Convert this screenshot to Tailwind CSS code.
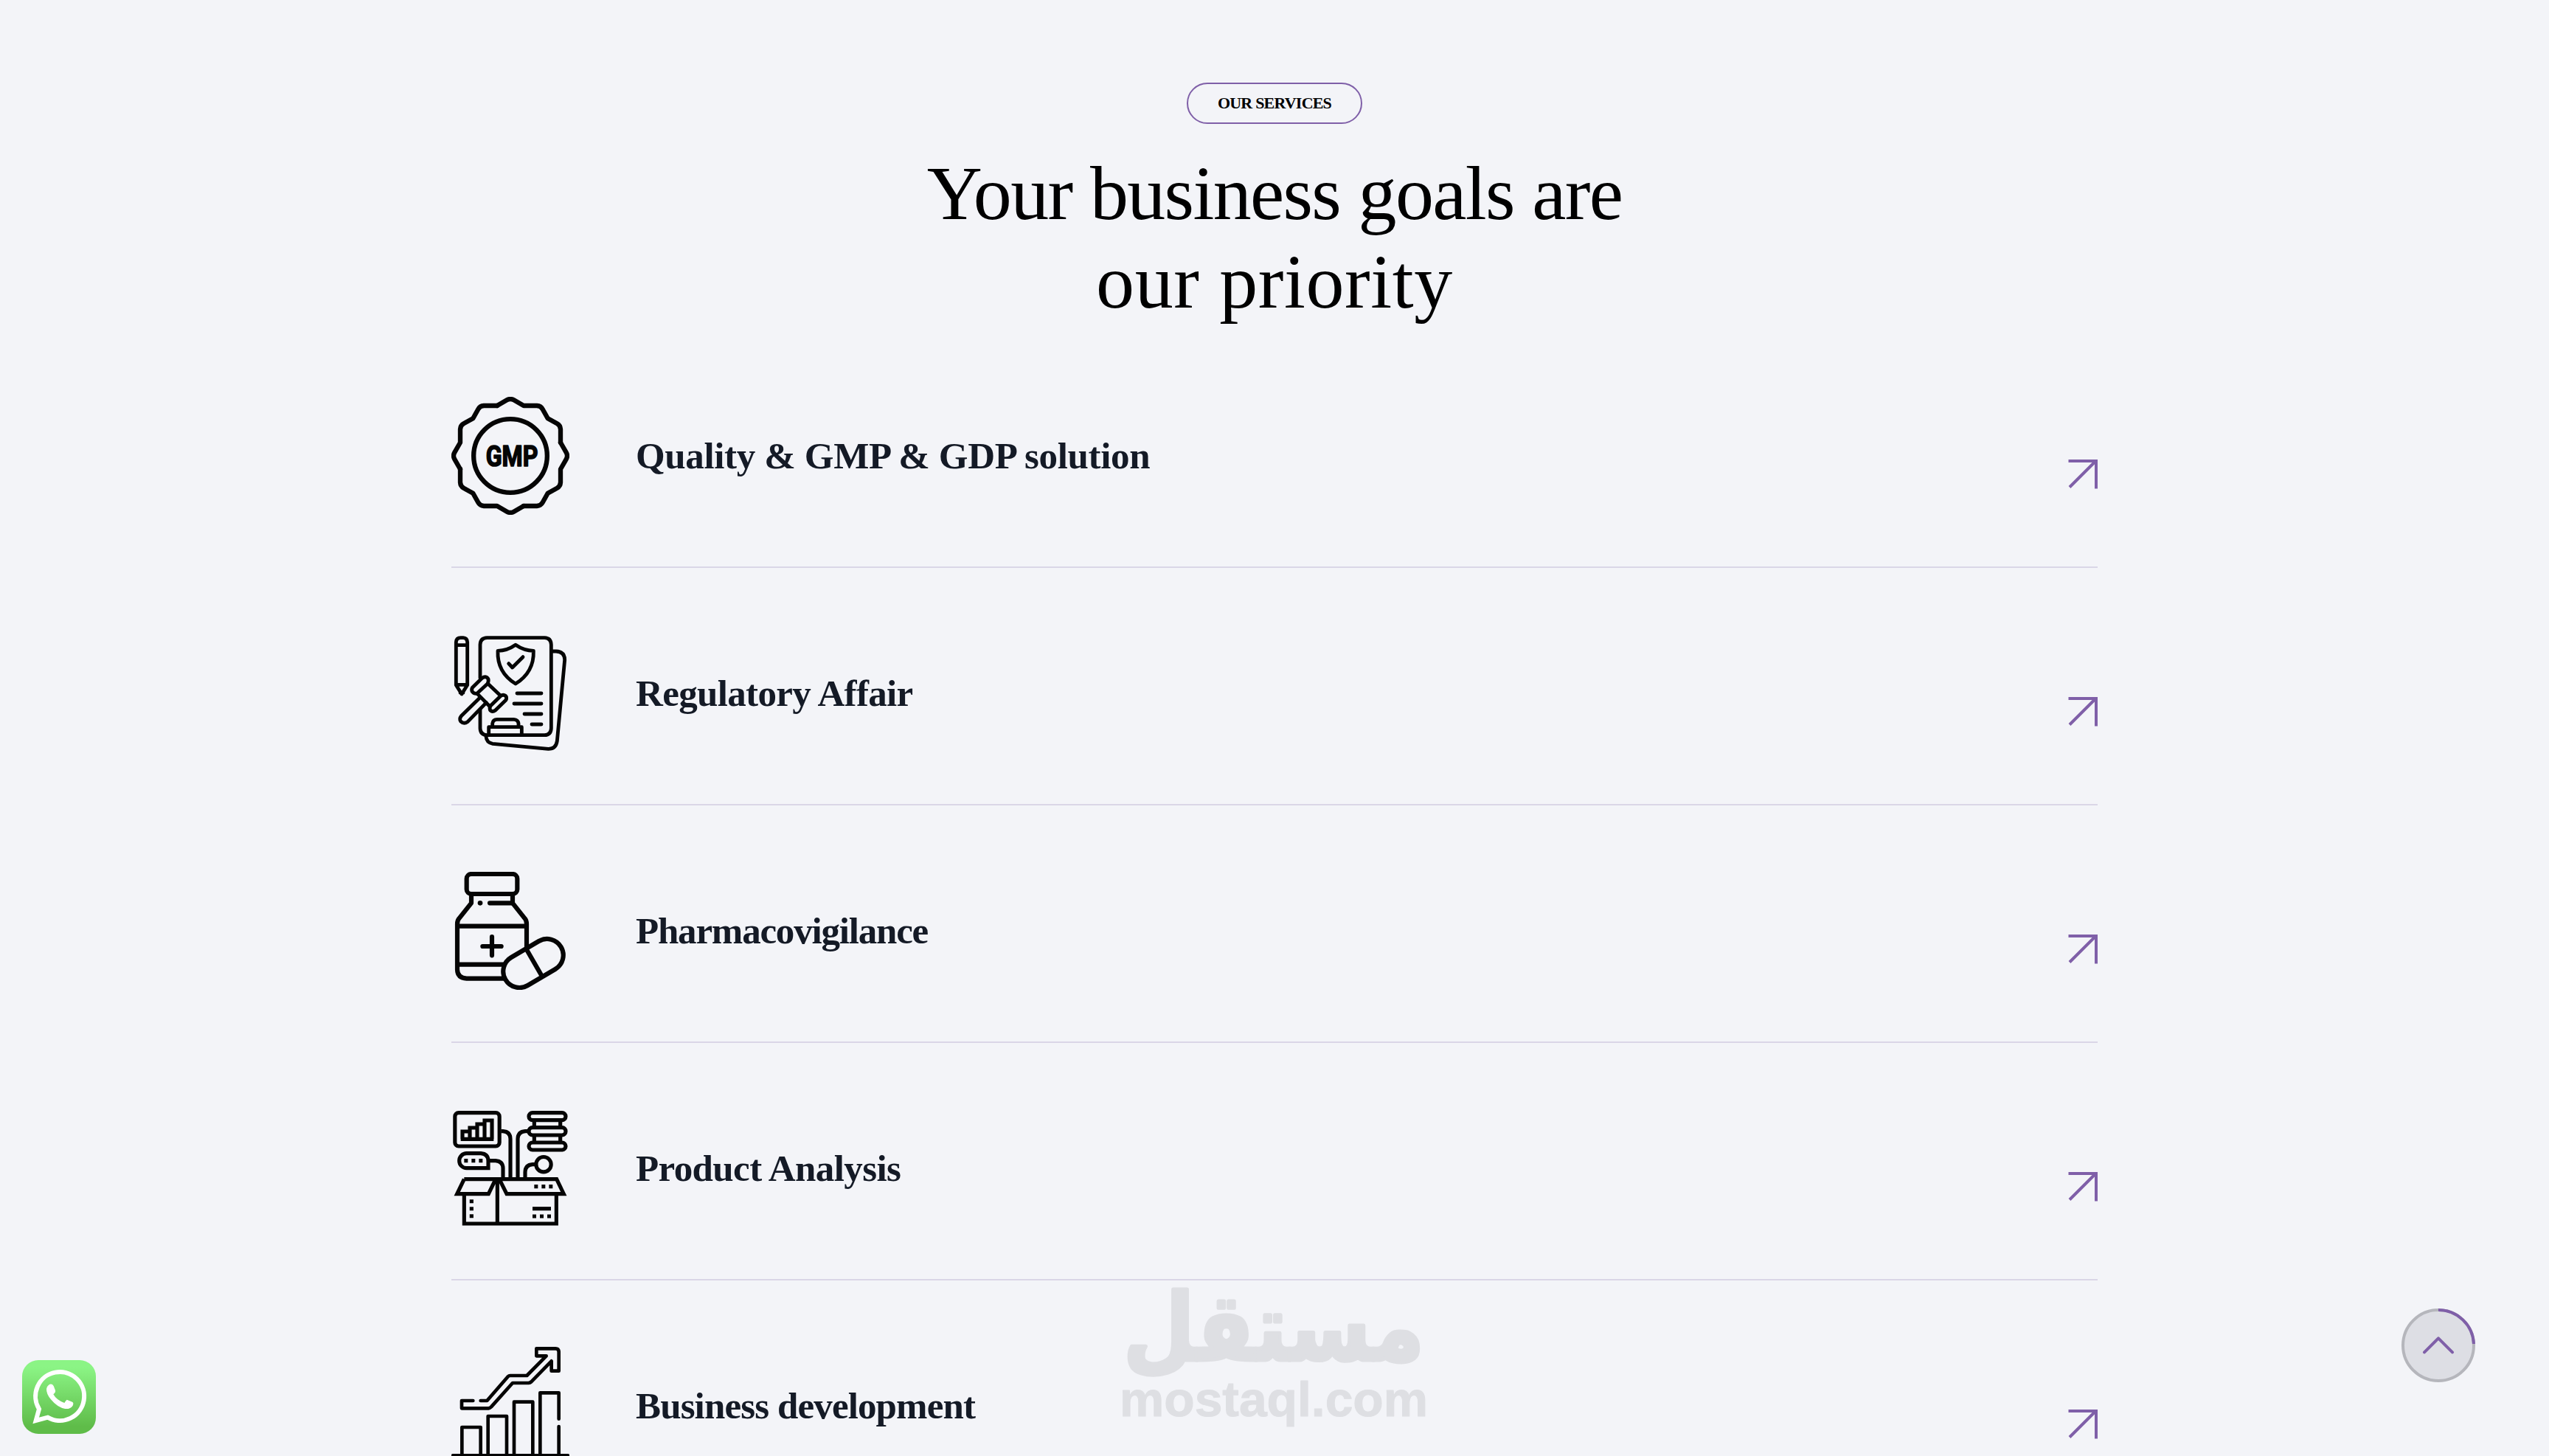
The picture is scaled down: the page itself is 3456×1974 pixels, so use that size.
<!DOCTYPE html>
<html lang="en">
<head>
  <meta charset="UTF-8" />
  <meta name="viewport" content="width=device-width, initial-scale=1" />
  <title>Our Services</title>
  <script src="https://cdn.jsdelivr.net/npm/@tailwindcss/browser@4"></script>
</head>
<body class="bg-[#f3f4f8] h-[1974px] overflow-hidden relative font-['Liberation_Serif',serif]">

  <section class="w-[2232px] ml-[612px] pt-28 flex flex-col">
    <div class="flex flex-col items-center text-black">
      <span class="w-[238px] h-14 flex items-center justify-center pb-0.5 border-2 border-[#7f5fa8] rounded-[28px] text-[22px] font-bold tracking-[-0.8px] whitespace-nowrap">OUR SERVICES</span>
      <h2 class="mt-[34px] text-[104px] leading-[120px] text-center whitespace-nowrap">
        <span class="block tracking-[-1.65px]">Your business goals are</span>
        <span class="block tracking-[0.6px]">our priority</span>
      </h2>
    </div>

    <div class="mt-1.5 text-[51px] leading-[60px] font-bold text-[#141a26] whitespace-nowrap">
      <!-- Quality -->
      <a class="flex h-[322px] pt-[90px] pb-[70px] border-b-2 border-[#dad6e7]">
        <svg class="size-40 shrink-0" viewBox="36 54 480 480" fill="none" stroke="#050505" stroke-width="19" stroke-linejoin="round" stroke-linecap="round">
          <path id="edge" d="M222 90L262 67Q276 59 290 67L330 90H384Q400 91 407 104L428 142L466 163Q479 170 480 186V240" />
          <use href="#edge" transform="rotate(90 276 294)" />
          <use href="#edge" transform="rotate(180 276 294)" />
          <use href="#edge" transform="rotate(270 276 294)" />
          <circle cx="276" cy="294" r="149.500" />
          <text x="176" y="335" textLength="212" lengthAdjust="spacingAndGlyphs" font-family="Roboto, sans-serif" font-weight="700" font-size="118" fill="#050505" stroke-width="5">GMP</text>
        </svg>
        <h3 class="ml-[90px] mt-[50px] flex-1 tracking-[-0.35px]">Quality &amp; GMP &amp; GDP solution</h3>
        <svg class="w-10 h-10 mt-[85px]" viewBox="0 0 40 40" fill="none" stroke="#7f5fa8" stroke-width="4"><path d="M.500 2H38V39.500M2 37.500L37 2.500" /></svg>
      </a>

      <!-- Regulatory -->
      <a class="flex h-[322px] pt-[90px] pb-[70px] border-b-2 border-[#dad6e7]">
        <svg class="size-40 shrink-0" viewBox="36 30 480 480" fill="none" stroke="#050505" stroke-width="14.500" stroke-linejoin="round" stroke-linecap="round">
          <path d="M448 99H462Q497 101 497 134L466 464Q461 497 430 496L204 475Q179 471 177 446" />
          <path d="M153 208V72Q154 45 181 44H415Q441 45 442 72V412Q441 439 415 440H181Q154 439 153 412V336" />
          <path d="M55 236V62Q56 44 74 44H84Q100 45 101 62V236L78 273ZM56 74H100M56 235H100M72 268H84" />
          <path d="M297 73Q332 97 370 97Q373 184 297 231Q221 184 225 97Q263 97 297 73Z" />
          <path d="M269 149L284 165L327 122M303 270H402M291 312H402M333 354H402M363 396H402" />
          <path d="M122 246L161 208Q171 200 180 205Q189 211 186 223L183 231L140 271Q126 272 120 262Q117 253 122 246Z" />
          <path d="M184 230L233 277M141 271L190 321" />
          <path d="M195 321L235 282Q246 273 256 280Q263 287 258 297L215 339Q203 348 195 340Q189 331 195 321Z" />
          <path d="M154 286L76 362Q67 373 74 384Q87 397 102 386L178 308" />
          <path d="M188 440V407H322V440M203 402V393Q205 376 222 376H290Q307 377 309 393V402" />
        </svg>
        <h3 class="ml-[90px] mt-[50px] flex-1 tracking-[-0.65px]">Regulatory Affair</h3>
        <svg class="w-10 h-10 mt-[85px]" viewBox="0 0 40 40" fill="none" stroke="#7f5fa8" stroke-width="4"><path d="M.500 2H38V39.500M2 37.500L37 2.500" /></svg>
      </a>

      <!-- Pharmacovigilance -->
      <a class="flex h-[322px] pt-[90px] pb-[70px] border-b-2 border-[#dad6e7]">
        <svg class="size-40 shrink-0" viewBox="36 36 480 480" fill="none" stroke="#050505" stroke-width="18.500" stroke-linejoin="round" stroke-linecap="round">
          <rect x="98" y="45" width="206" height="81" rx="19" />
          <path d="M117 132V163L67 226Q60 234 60 248V434Q61 468 98 470H250M285 132V163L335 226Q342 234 342 248V343M60 257H342M60 413H250" />
          <path d="M192 163H285M201 300V376M163 339H239" />
          <circle cx="153" cy="163" r="10" fill="#050505" stroke="none" />
          <path d="M279.500 384L391.500 318A66 66 0 0 1 458.500 432L346.500 498A66 66 0 0 1 279.500 384ZM343 354L404 460" />
        </svg>
        <h3 class="ml-[90px] mt-[50px] flex-1 tracking-[-1.2px]">Pharmacovigilance</h3>
        <svg class="w-10 h-10 mt-[85px]" viewBox="0 0 40 40" fill="none" stroke="#7f5fa8" stroke-width="4"><path d="M.500 2H38V39.500M2 37.500L37 2.500" /></svg>
      </a>

      <!-- Product analysis -->
      <a class="flex h-[322px] pt-[90px] pb-[70px] border-b-2 border-[#dad6e7]">
        <svg class="size-40 shrink-0" viewBox="36 42 480 480" fill="none" stroke="#050505" stroke-width="15.500">
          <rect x="50.500" y="56" width="181" height="136" rx="15" />
          <path d="M81 163V132H111V163M111 132V117H141V163M141 117V102H171V163M171 102V87H201V163M74 163H208" />
          <path d="M238 131H246Q275 133 276 162V322M345 131H336Q307 133 306 162V322" />
          <rect x="351" y="56" width="150" height="30" rx="15" />
          <rect x="351" y="116" width="150" height="31" rx="15" />
          <rect x="351" y="177" width="150" height="30" rx="15" />
          <path d="M373 86V116M479 86V116M373 147V177M479 147V177" />
          <path d="M186 281H98A30 30 0 0 1 98 221H156Q185 223 186 251ZM193 251H216Q245 253 246 281V322M378 266H366Q337 268 336 297V322" />
          <circle cx="411" cy="266" r="30.500" />
          <path d="M88 326H464L493 386H261L231 326M88 326L59 386H187L216 326M88 388V507H463V388M223 326V507" />
          <path d="M366 446H441" />
          <path stroke-dasharray="15 15" d="M88 251H164M373 356H449M366 477H441M118 409V485" />
        </svg>
        <h3 class="ml-[90px] mt-[50px] flex-1 tracking-[-0.6px]">Product Analysis</h3>
        <svg class="w-10 h-10 mt-[85px]" viewBox="0 0 40 40" fill="none" stroke="#7f5fa8" stroke-width="4"><path d="M.500 2H38V39.500M2 37.500L37 2.500" /></svg>
      </a>

      <!-- Business development -->
      <a class="flex h-[322px] pt-[90px] pb-[70px] border-b-2 border-[#dad6e7]">
        <svg class="size-40 shrink-0" viewBox="36 48 480 480" fill="none" stroke="#050505" stroke-width="14" stroke-linejoin="round" stroke-linecap="round">
          <path d="M124 267H78V298H187Q193 297 198 292L285 195H350Q356 194 361 190L443 106V146H473V68Q472 55 460 55H382V85H422L343 165H275Q270 165 265 170L181 267H155" />
          <path d="M79 486V375H155V486M185 486V330H261V486M291 486V272H367V486M397 486V235H473V341M473 372V486M42 490H510" />
        </svg>
        <h3 class="ml-[90px] mt-[50px] flex-1 tracking-[-0.87px]">Business development</h3>
        <svg class="w-10 h-10 mt-[85px]" viewBox="0 0 40 40" fill="none" stroke="#7f5fa8" stroke-width="4"><path d="M.500 2H38V39.500M2 37.500L37 2.500" /></svg>
      </a>
    </div>
  </section>

  <!-- Watermark -->
  <svg class="absolute left-[1490px] top-[1720px] w-[480px] h-[254px]" viewBox="0 0 480 254" fill="#dedfe3" stroke="#dedfe3" stroke-linejoin="round">
    <text x="237" y="124" text-anchor="middle" textLength="408" lengthAdjust="spacingAndGlyphs" font-family="DejaVu Sans, sans-serif" font-weight="700" font-size="126" stroke-width="5">مستقل</text>
    <text x="28" y="200" textLength="418" lengthAdjust="spacingAndGlyphs" font-family="Liberation Sans, sans-serif" font-weight="700" font-size="67" stroke-width="1">mostaql.com</text>
  </svg>

  <!-- WhatsApp -->
  <svg class="absolute left-[30px] top-[1844px] size-[100px]" viewBox="60 72 300 300">
    <defs>
      <linearGradient id="wa" x1="0" y1="0" x2="0" y2="1">
        <stop offset="0.100" stop-color="#8bf485" />
        <stop offset="0.900" stop-color="#5fbc49" />
      </linearGradient>
    </defs>
    <rect x="60" y="72" width="300" height="300" rx="66" fill="url(#wa)" />
    <path d="M116 318L129 271A99 99 0 1 1 164 305Z" fill="none" stroke="#fff" stroke-width="18" />
    <path d="M168 173Q180 165 188 177L195 195Q197 203 187 211Q200 235 232 246Q238 236 242 233L264 242Q271 246 266 257Q256 272 235 270Q204 265 177 232Q158 209 159 189Q160 179 168 173Z" fill="#fff" />
  </svg>

  <!-- Scroll to top -->
  <svg class="absolute left-[3256px] top-[1774px] size-[100px]" viewBox="108 72 300 300" fill="none" stroke-width="12">
    <circle cx="258" cy="222" r="144" fill="#dddee4" stroke="#b5b6bc" />
    <path d="M258 78A144 144 0 0 1 402 216" stroke="#7f5fa8" />
    <path d="M201 250L258 193L315 250" stroke="#7f5fa8" stroke-linecap="round" stroke-linejoin="round" />
  </svg>
</body>
</html>
